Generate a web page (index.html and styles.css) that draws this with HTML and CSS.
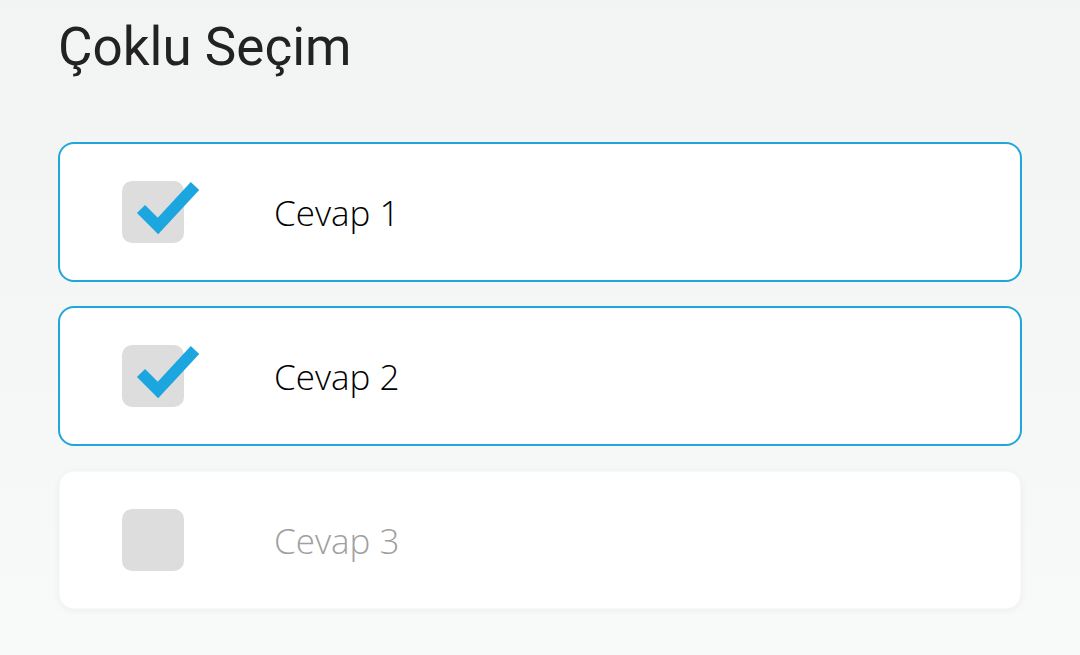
FILE: index.html
```html
<!DOCTYPE html>
<html lang="tr">
<head>
<meta charset="utf-8">
<title>Çoklu Seçim</title>
<link rel="stylesheet" href="styles.css">
</head>
<body>
<main class="page">
  <h1 class="title">Çoklu Seçim</h1>
  <ul class="options">
    <li class="option checked">
      <span class="box">
        <svg class="tick" viewBox="0 0 80 70" width="80" height="70"><path d="M19 38 L36 55 L73 15" /></svg>
      </span>
      <span class="label">Cevap 1</span>
    </li>
    <li class="option checked">
      <span class="box">
        <svg class="tick" viewBox="0 0 80 70" width="80" height="70"><path d="M19 38 L36 55 L73 15" /></svg>
      </span>
      <span class="label">Cevap 2</span>
    </li>
    <li class="option">
      <span class="box"></span>
      <span class="label">Cevap 3</span>
    </li>
  </ul>
</main>
</body>
</html>
```
FILE: styles.css
```css
html, body {
  margin: 0;
  padding: 0;
  height: 100%;
}
body {
  background: linear-gradient(#f2f3f3, #f8f9f9);
  font-family: "Open Sans", "Noto Sans", sans-serif;
}
.page {
  padding: 12px 58px 0 58px;
}
.title {
  margin: 0;
  font-family: Roboto, sans-serif;
  font-weight: 400;
  font-size: 53px;
  line-height: 70px;
  color: #222222;
}
.options {
  list-style: none;
  margin: 60px 0 0 0;
  padding: 0;
  display: flex;
  flex-direction: column;
  gap: 24px;
}
.option {
  height: 136px;
  border: 2px solid transparent;
  border-radius: 16px;
  background: #ffffff;
  background-clip: padding-box;
  display: flex;
  align-items: center;
  padding-left: 62px;
}
.option.checked {
  border-color: #1fa6db;
  background-clip: border-box;
}
.option:not(.checked) {
  box-shadow: 0 1px 6px rgba(0, 0, 0, 0.04);
}
.box {
  position: relative;
  width: 62px;
  height: 62px;
  border-radius: 10px;
  background: #dddddd;
  flex: none;
}
.tick {
  position: absolute;
  left: 0;
  top: -10px;
  overflow: visible;
}
.tick path {
  fill: none;
  stroke: #1ca6e0;
  stroke-width: 11.5;
  stroke-linejoin: miter;
  stroke-linecap: butt;
}
.label {
  margin-left: 90px;
  font-size: 35px;
  font-weight: 300;
  color: #000000;
}
.option:not(.checked) .label {
  color: #a0a0a0;
}
```
